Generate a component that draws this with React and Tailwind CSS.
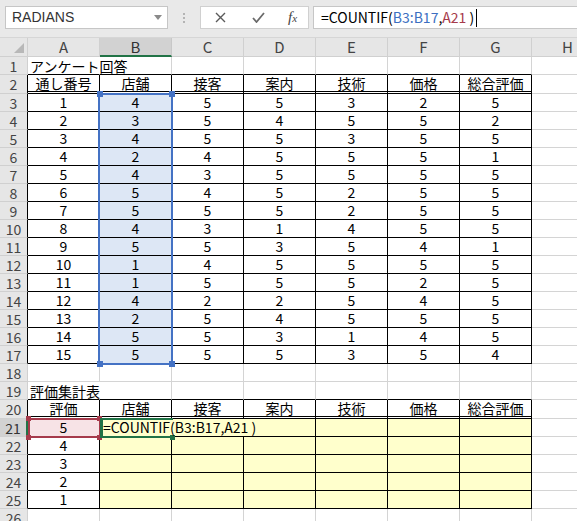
import React from 'react';

const data = [
  [1, 4, 5, 5, 3, 2, 5],
  [2, 3, 5, 4, 5, 5, 2],
  [3, 4, 5, 5, 3, 5, 5],
  [4, 2, 4, 5, 5, 5, 1],
  [5, 4, 3, 5, 5, 5, 5],
  [6, 5, 4, 5, 2, 5, 5],
  [7, 5, 5, 5, 2, 5, 5],
  [8, 4, 3, 1, 4, 5, 5],
  [9, 5, 5, 3, 5, 4, 1],
  [10, 1, 4, 5, 5, 5, 5],
  [11, 1, 5, 5, 5, 2, 5],
  [12, 4, 2, 2, 5, 4, 5],
  [13, 2, 5, 4, 5, 5, 5],
  [14, 5, 5, 3, 1, 4, 5],
  [15, 5, 5, 5, 3, 5, 4],
];

const heads1 = ['通し番号', '店舗', '接客', '案内', '技術', '価格', '総合評価'];
const heads2 = ['評価', '店舗', '接客', '案内', '技術', '価格', '総合評価'];

const font = { fontFamily: '"Noto Sans CJK JP", "Noto Sans", sans-serif' };

const RowHead = ({ n, h, edge, sel }) => {
  let cls = 'w-[28px] shrink-0 bg-[#e6e6e6] border-r border-b border-[#d0d0d0] text-center text-[14px] text-[#444] ';
  if (edge) cls += 'border-r-black ';
  if (sel) cls = 'w-[28px] shrink-0 bg-[#d2d2d2] border-r-2 border-r-[#217346] border-b border-b-[#d0d0d0] text-center text-[14px] text-[#333] ';
  return (
    <div className={cls + (h === 19 ? 'h-[19px] leading-[19px]' : 'h-[18px] leading-[18px]')}>{n}</div>
  );
};

const Plain = ({ children, noRight, blackBottom, left }) => {
  let cls = 'w-[72px] shrink-0 border-b whitespace-nowrap ';
  cls += noRight ? 'border-r border-r-transparent ' : 'border-r border-r-[#d4d4d4] ';
  cls += blackBottom ? 'border-b-black ' : 'border-b-[#d4d4d4] ';
  return (
    <div className={cls + 'relative'}>
      {left && <span className="absolute left-[2px] top-0 z-10 text-[14px] leading-[18px] text-black">{children}</span>}
    </div>
  );
};

const Boxed = ({ children, dbl, bg, noRight }) => {
  let cls = 'w-[72px] shrink-0 text-center text-[14px] text-black border-black whitespace-nowrap ';
  cls += noRight ? 'border-r border-r-transparent ' : 'border-r ';
  cls += dbl ? 'border-b-[3px] border-double leading-[16px] ' : 'border-b leading-[17px] ';
  if (bg === 'blue') cls += 'bg-[#dde7f5] ';
  if (bg === 'yellow') cls += 'bg-[#ffffcc] ';
  if (bg === 'pink') cls += 'bg-[#f7e3e6] ';
  return <div className={cls}>{children}</div>;
};

const H = () => <div className="w-[72px] shrink-0 border-r border-b border-[#d4d4d4]"></div>;

export default function App() {
  const cols = ['A', 'B', 'C', 'D', 'E', 'F', 'G', 'H'];

  return (
    <div className="w-[577px] h-[521px] overflow-hidden bg-white" style={font}>
      {/* formula bar */}
      <div className="h-[38px] bg-[#e9e9e9] flex items-start pt-[6px] border-b border-[#d6d6d6]">
        <div className="ml-[5px] w-[163px] h-[23px] bg-white border border-[#c6c6c6] flex items-center justify-between pl-[6px] pr-[5px]">
          <span className="text-[14px] text-[#333]" style={{ fontFamily: '"Liberation Sans", sans-serif' }}>RADIANS</span>
          <svg width="8" height="5" viewBox="0 0 8 5"><path d="M0 0h8L4 5z" fill="#8a8a8a" /></svg>
        </div>
        <div className="w-[32px] h-[23px] flex flex-col items-center justify-center gap-[2px]">
          <span className="w-[2px] h-[2px] bg-[#b4b4b4]"></span>
          <span className="w-[2px] h-[2px] bg-[#b4b4b4]"></span>
          <span className="w-[2px] h-[2px] bg-[#b4b4b4]"></span>
        </div>
        <div className="w-[109px] h-[23px] bg-white border border-[#d0d0d0] flex items-center">
          <div className="w-[38px] flex justify-center">
            <svg width="11" height="11" viewBox="0 0 11 11"><path d="M1 1l9 9M10 1l-9 9" stroke="#5a5a5a" strokeWidth="1.4" /></svg>
          </div>
          <div className="w-[38px] flex justify-center">
            <svg width="13" height="11" viewBox="0 0 13 11"><path d="M1 6l3.5 4L12 1" stroke="#6a6a6a" strokeWidth="1.8" fill="none" /></svg>
          </div>
          <div className="flex-1 flex justify-center">
            <span className="italic text-[15px] text-[#444]" style={{ fontFamily: '"Liberation Serif", serif' }}>f<span className="text-[11px]">x</span></span>
          </div>
        </div>
        <div className="ml-[4px] flex-1 h-[23px] bg-white border border-r-0 border-[#c6c6c6] flex items-center pl-[7px] text-[14px] whitespace-nowrap">
          <span className="text-black">=COUNTIF(</span>
          <span className="text-[#3c6fc1]">B3:B17</span>
          <span className="text-black">,</span>
          <span className="text-[#a63a4b]">A21</span>
          <span className="text-black">&nbsp;)</span>
          <span className="w-px h-[18px] bg-black ml-[2px]"></span>
        </div>
      </div>

      {/* sheet */}
      <div className="relative">
        {/* column headers */}
        <div className="flex h-[19px]">
          <div className="w-[28px] shrink-0 bg-[#e6e6e6] border-r border-b border-[#d0d0d0] flex items-end justify-end pr-[3px] pb-[3px]">
            <svg width="10" height="10" viewBox="0 0 10 10"><path d="M10 0v10H0z" fill="#b8b8b8" /></svg>
          </div>
          {cols.map((c) =>
            c === 'B' ? (
              <div key={c} className="w-[72px] shrink-0 bg-[#d2d2d2] border-r border-[#c8c8c8] border-b-2 border-b-[#217346] text-center text-[15px] leading-[18px] text-[#333]">{c}</div>
            ) : (
              <div key={c} className="w-[72px] shrink-0 bg-[#e6e6e6] border-r border-b border-[#d0d0d0] text-center text-[15px] leading-[18px] text-[#444]">{c}</div>
            )
          )}
        </div>

        {/* row 1 */}
        <div className="flex h-[18px]">
          <RowHead n={1} h={18} />
          <Plain noRight blackBottom left>アンケート回答</Plain>
          {[0, 1, 2, 3, 4, 5].map((i) => <Plain key={i} blackBottom />)}
          <H />
        </div>

        {/* row 2 */}
        <div className="flex h-[19px]">
          <RowHead n={2} h={19} edge />
          {heads1.map((t) => <Boxed key={t} dbl>{t}</Boxed>)}
          <H />
        </div>

        {data.map((r, i) => (
          <div key={i} className="flex h-[18px]">
            <RowHead n={i + 3} h={18} edge />
            {r.map((v, j) => <Boxed key={j} bg={j === 1 ? 'blue' : undefined}>{v}</Boxed>)}
            <H />
          </div>
        ))}

        {/* row 18 */}
        <div className="flex h-[18px]">
          <RowHead n={18} h={18} />
          {[0, 1, 2, 3, 4, 5, 6].map((i) => <Plain key={i} />)}
          <H />
        </div>

        {/* row 19 */}
        <div className="flex h-[18px]">
          <RowHead n={19} h={18} />
          <Plain noRight blackBottom left>評価集計表</Plain>
          {[0, 1, 2, 3, 4, 5].map((i) => <Plain key={i} blackBottom />)}
          <H />
        </div>

        {/* row 20 */}
        <div className="flex h-[19px]">
          <RowHead n={20} h={19} edge />
          {heads2.map((t) => <Boxed key={t} dbl>{t}</Boxed>)}
          <H />
        </div>

        {[5, 4, 3, 2, 1].map((v, i) => (
          <div key={v} className="flex h-[18px]">
            <RowHead n={21 + i} h={18} edge={i > 0} sel={i === 0} />
            <Boxed bg={i === 0 ? 'pink' : undefined}>{v}</Boxed>
            {i === 0 ? (
              <>
                <div className="w-[72px] shrink-0 bg-[#ffffcc] border-b border-black relative">
                  <span className="absolute left-[3px] top-0 z-40 text-[14px] leading-[17px] text-black whitespace-nowrap">=COUNTIF(B3:B17,A21&nbsp;)</span>
                </div>
                <div className="w-[72px] shrink-0 bg-[#ffffcc] border-b border-black"></div>
                <Boxed bg="yellow" />
              </>
            ) : (
              <>
                <Boxed bg="yellow" />
                <Boxed bg="yellow" />
                <Boxed bg="yellow" />
              </>
            )}
            <Boxed bg="yellow" />
            <Boxed bg="yellow" />
            <Boxed bg="yellow" />
            <H />
          </div>
        ))}

        {/* row 26 */}
        <div className="flex h-[18px]">
          <RowHead n={26} h={18} />
          {[0, 1, 2, 3, 4, 5, 6].map((i) => <Plain key={i} />)}
          <H />
        </div>

        {/* B3:B17 reference outline */}
        <div className="absolute left-[98px] top-[55px] w-[75px] h-[272px] border-2 border-[#4472c4] pointer-events-none z-20"></div>
        <div className="absolute left-[97px] top-[53px] w-[6px] h-[6px] bg-[#4472c4] z-20"></div>
        <div className="absolute left-[169px] top-[53px] w-[6px] h-[6px] bg-[#4472c4] z-20"></div>
        <div className="absolute left-[97px] top-[323px] w-[6px] h-[6px] bg-[#4472c4] z-20"></div>
        <div className="absolute left-[169px] top-[323px] w-[6px] h-[6px] bg-[#4472c4] z-20"></div>

        {/* A21 reference outline */}
        <div className="absolute left-[28px] top-[380px] w-[73px] h-[20px] border-2 border-[#a63a4b] z-20"></div>
        <div className="absolute left-[26px] top-[378px] w-[5px] h-[5px] bg-[#a63a4b] z-20"></div>
        <div className="absolute left-[97px] top-[378px] w-[5px] h-[5px] bg-[#a63a4b] z-20"></div>
        <div className="absolute left-[26px] top-[397px] w-[5px] h-[5px] bg-[#a63a4b] z-20"></div>
        <div className="absolute left-[97px] top-[397px] w-[5px] h-[5px] bg-[#a63a4b] z-20"></div>

        {/* active cell B21 (edit mode, no right edge) */}
        <div className="absolute left-[100px] top-[380px] w-[73px] h-[20px] border-t-2 border-b-2 border-l-[3px] border-[#217346] z-30"></div>
        <div className="absolute left-[170px] top-[397px] w-[5px] h-[5px] bg-[#217346] z-30"></div>
      </div>
    </div>
  );
}
